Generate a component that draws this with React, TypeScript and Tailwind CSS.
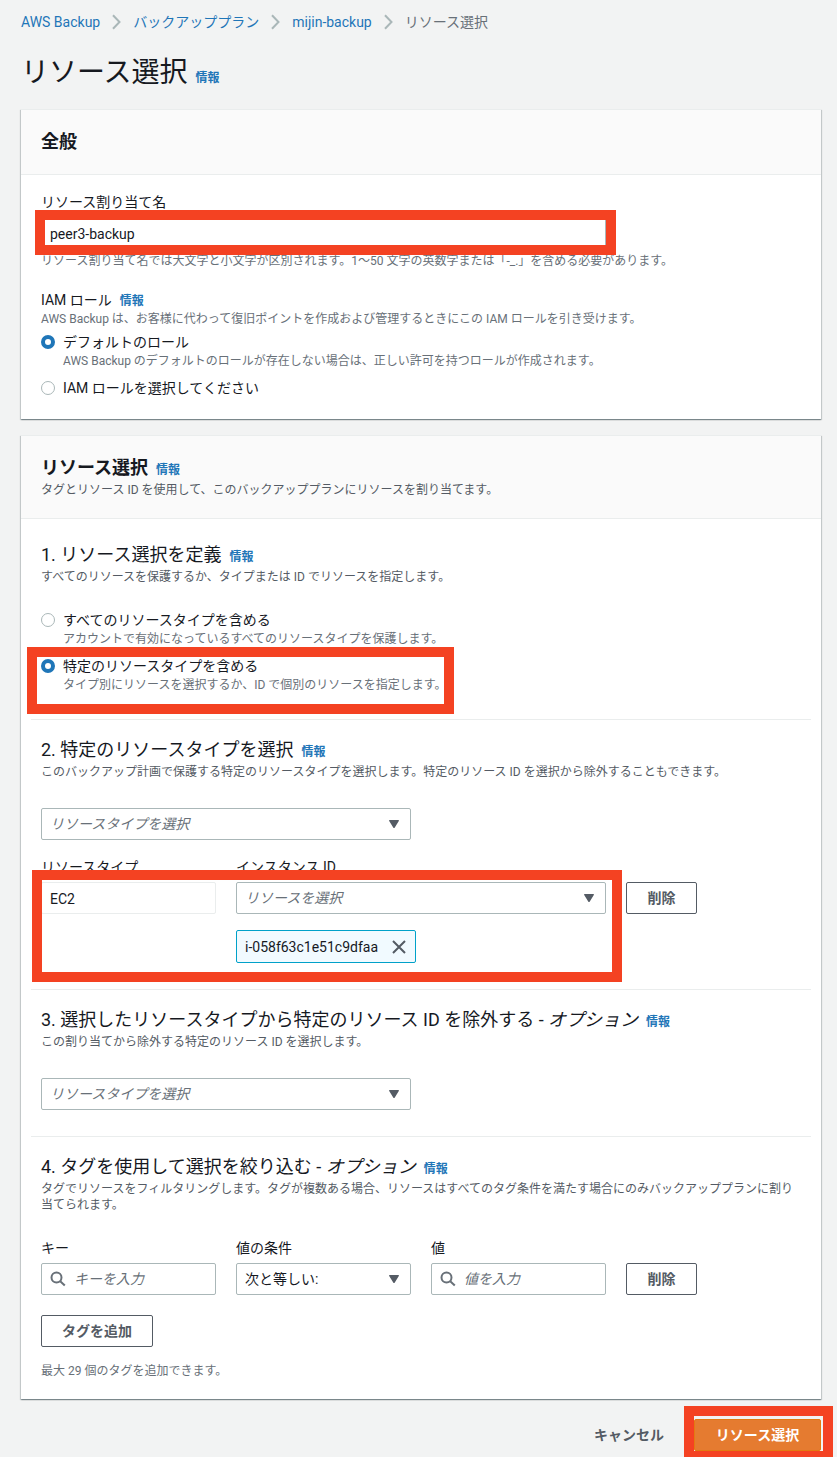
import { useState, type ReactNode } from 'react';

const fieldBase = 'h-8 w-full rounded-xs border border-[#aab7b8] bg-white text-sm text-[#16191f]';
const labelText = 'block text-sm leading-[22px] text-[#16191f]';
const hintText = 'text-xs leading-4 text-[#687078]';

function InfoLink() {
  return (
    <a href="#info" className="ml-2 text-xs font-bold not-italic text-[#1f76b8] hover:underline">
      情報
    </a>
  );
}

function Chevron() {
  return (
    <svg className="mx-3 shrink-0" width="9" height="16" viewBox="0 0 9 16" fill="none" stroke="#aab7b8" strokeWidth="2" aria-hidden="true">
      <path d="M1 1.2 7.5 8 1 14.8" />
    </svg>
  );
}

function SearchIcon() {
  return (
    <svg className="shrink-0" width="16" height="16" viewBox="0 0 16 16" fill="none" stroke="#687078" strokeWidth="2" aria-hidden="true">
      <circle cx="6.5" cy="6.5" r="5" />
      <path d="m10.2 10.2 4.6 4.3" />
    </svg>
  );
}

// Red frame that points the reader at a part of the form
function Highlight({ className }: { className: string }) {
  return <span aria-hidden="true" className={`pointer-events-none absolute z-10 border-10 border-[#f44222] ${className}`} />;
}

function Card({ title, children }: { title: ReactNode; children: ReactNode }) {
  return (
    <section className="border-t border-[#eaeded] bg-white shadow-[0_1px_1px_0_rgba(0,28,36,0.3),1px_1px_1px_0_rgba(0,28,36,0.15),-1px_1px_1px_0_rgba(0,28,36,0.15)]">
      <header className="border-b border-[#eaeded] bg-[#fafafa] p-5">{title}</header>
      {children}
    </section>
  );
}

interface StepProps {
  title: string;
  optional?: boolean;
  desc: string;
  children: ReactNode;
}

function Step({ title, optional, desc, children }: StepProps) {
  return (
    <section className="px-2.5 pt-[18px] pb-[26px] last:pb-2.5">
      <h3 className="text-lg leading-6">
        {title}
        {optional && <> - <i>オプション</i></>}
        <InfoLink />
      </h3>
      <p className="mt-0.5 text-xs leading-4 text-[#545b64]">{desc}</p>
      {children}
    </section>
  );
}

interface RadioProps {
  name: string;
  label: string;
  desc?: string;
  checked: boolean;
  onChange: () => void;
}

function Radio({ name, label, desc, checked, onChange }: RadioProps) {
  return (
    <label className="flex gap-2">
      <input
        type="radio"
        name={name}
        checked={checked}
        onChange={onChange}
        className="mt-1 size-3.5 shrink-0 appearance-none rounded-full border border-[#aab7b8] bg-white checked:border-4 checked:border-[#1f76b8]"
      />
      <span>
        <span className={labelText}>{label}</span>
        {desc && <span className={`block ${hintText}`}>{desc}</span>}
      </span>
    </label>
  );
}

interface SelectProps {
  id: string;
  label?: string;
  placeholder?: boolean;
  options: string[];
}

function Select({ id, label, placeholder, options }: SelectProps) {
  return (
    <div className="relative">
      <select
        id={id}
        aria-label={label}
        className={`${fieldBase} appearance-none pr-8 pl-2 ${placeholder ? 'italic text-[#687078]' : ''}`}
      >
        {options.map((o) => (
          <option key={o}>{o}</option>
        ))}
      </select>
      <svg className="pointer-events-none absolute top-3 right-3" width="10" height="8" viewBox="0 0 10 8" fill="#545b64" aria-hidden="true">
        <path d="M.8 0h8.4a.7.7 0 0 1 .6 1.1L5.8 7.4a1 1 0 0 1-1.6 0L.2 1.1A.7.7 0 0 1 .8 0Z" />
      </svg>
    </div>
  );
}

function SearchField({ id, label, placeholder }: { id: string; label: string; placeholder: string }) {
  return (
    <div>
      <label htmlFor={id} className={labelText}>{label}</label>
      <div className={`mt-1 flex items-center gap-2 px-2 ${fieldBase}`}>
        <SearchIcon />
        <input id={id} type="text" placeholder={placeholder} className="w-full min-w-0 outline-none placeholder:italic placeholder:text-[#687078]" />
      </div>
    </div>
  );
}

function Button({ children }: { children: ReactNode }) {
  return (
    <button type="button" className="h-8 min-w-[71px] justify-self-start rounded-xs border border-[#545b64] bg-white px-5 text-sm font-bold text-[#545b64]">
      {children}
    </button>
  );
}

export default function App() {
  const [role, setRole] = useState('default');
  const [scope, setScope] = useState('specific');

  return (
    <main className="overflow-hidden bg-[#f2f3f3] pt-[11px] pr-4 pb-1.5 pl-[21px] font-['Roboto','Noto_Sans_CJK_JP',sans-serif] text-[#16191f]">
      <nav aria-label="パンくずリスト" className="flex items-center text-sm leading-[22px]">
        <a href="#backup" className="text-[#1f76b8]">AWS Backup</a>
        <Chevron />
        <a href="#plans" className="text-[#1f76b8]">バックアッププラン</a>
        <Chevron />
        <a href="#plan" className="text-[#1f76b8]">mijin-backup</a>
        <Chevron />
        <span className="text-[#687078]">リソース選択</span>
      </nav>

      <h1 className="mt-[22px] text-[28px] leading-9">
        リソース選択
        <InfoLink />
      </h1>

      <div className="mt-[18px] space-y-4">
        {/* General */}
        <Card title={<h2 className="text-lg leading-6 font-bold">全般</h2>}>
          <div className="px-5 pt-4 pb-5">
            <label htmlFor="assignment" className={labelText}>リソース割り当て名</label>
            <div className="mt-1 grid grid-cols-4 gap-5">
              <div className="relative col-span-3">
                <input id="assignment" type="text" defaultValue="peer3-backup" className={`${fieldBase} px-2 pt-0.5`} />
                <Highlight className="-top-[7px] -right-2.5 -bottom-1.5 -left-1.5" />
              </div>
            </div>
            <p className={`mt-1 ${hintText}`}>
              リソース割り当て名では大文字と小文字が区別されます。1～50 文字の英数字または「-_.」を含める必要があります。
            </p>

            <h3 className="mt-5 text-sm leading-[22px]">
              IAM ロール
              <InfoLink />
            </h3>
            <p className={hintText}>AWS Backup は、お客様に代わって復旧ポイントを作成および管理するときにこの IAM ロールを引き受けます。</p>
            <div className="mt-1 space-y-2">
              <Radio
                name="role"
                label="デフォルトのロール"
                desc="AWS Backup のデフォルトのロールが存在しない場合は、正しい許可を持つロールが作成されます。"
                checked={role === 'default'}
                onChange={() => setRole('default')}
              />
              <Radio name="role" label="IAM ロールを選択してください" checked={role === 'custom'} onChange={() => setRole('custom')} />
            </div>
          </div>
        </Card>

        {/* Resource selection */}
        <Card
          title={
            <>
              <h2 className="text-lg leading-6 font-bold">
                リソース選択
                <InfoLink />
              </h2>
              <p className="mt-0.5 text-xs leading-4 text-[#545b64]">タグとリソース ID を使用して、このバックアッププランにリソースを割り当てます。</p>
            </>
          }
        >
          <div className="divide-y divide-[#eaeded] px-2.5 pt-1.5 pb-2.5">
            <Step title="1. リソース選択を定義" desc="すべてのリソースを保護するか、タイプまたは ID でリソースを指定します。">
              <div className="mt-6 space-y-2">
                <Radio
                  name="scope"
                  label="すべてのリソースタイプを含める"
                  desc="アカウントで有効になっているすべてのリソースタイプを保護します。"
                  checked={scope === 'all'}
                  onChange={() => setScope('all')}
                />
                <div className="relative">
                  <Radio
                    name="scope"
                    label="特定のリソースタイプを含める"
                    desc="タイプ別にリソースを選択するか、ID で個別のリソースを指定します。"
                    checked={scope === 'specific'}
                    onChange={() => setScope('specific')}
                  />
                  <Highlight className="-top-2 -bottom-[21px] -left-3.5 w-[427px]" />
                </div>
              </div>
            </Step>

            <Step
              title="2. 特定のリソースタイプを選択"
              desc="このバックアップ計画で保護する特定のリソースタイプを選択します。特定のリソース ID を選択から除外することもできます。"
            >
              <div className="mt-7 grid grid-cols-2 gap-5">
                <Select id="include-type" label="リソースタイプ" placeholder options={['リソースタイプを選択']} />
              </div>
              <div className="mt-4 grid grid-cols-4 gap-5">
                <div className="relative col-span-3 grid grid-cols-3 gap-5">
                  <div>
                    <label htmlFor="type" className={labelText}>リソースタイプ</label>
                    <input id="type" type="text" readOnly value="EC2" className="mt-1 h-8 w-full rounded-xs border border-[#eaeded] px-2 pt-0.5 text-sm" />
                  </div>
                  <div className="col-span-2">
                    <label htmlFor="instance" className={`mb-1 ${labelText}`}>インスタンス ID</label>
                    <Select id="instance" placeholder options={['リソースを選択']} />
                    <div className="mt-4 flex h-[33px] w-fit min-w-[180px] items-center justify-between gap-2 rounded-xs border border-[#00a1c9] bg-[#f1faff] px-2 text-sm">
                      <span>i-058f63c1e51c9dfaa</span>
                      <button type="button" aria-label="i-058f63c1e51c9dfaa を削除">
                        <svg width="16" height="16" viewBox="0 0 16 16" fill="none" stroke="#545b64" strokeWidth="2" aria-hidden="true">
                          <path d="m2 2 12 12M14 2 2 14" />
                        </svg>
                      </button>
                    </div>
                  </div>
                  <Highlight className="top-3.5 -right-4 -bottom-[19px] -left-[9px]" />
                </div>
                <div className="pt-[26px]">
                  <Button>削除</Button>
                </div>
              </div>
            </Step>

            <Step title="3. 選択したリソースタイプから特定のリソース ID を除外する" optional desc="この割り当てから除外する特定のリソース ID を選択します。">
              <div className="mt-7 grid grid-cols-2 gap-5">
                <Select id="exclude-type" label="除外するリソースタイプ" placeholder options={['リソースタイプを選択']} />
              </div>
            </Step>

            <Step
              title="4. タグを使用して選択を絞り込む"
              optional
              desc="タグでリソースをフィルタリングします。タグが複数ある場合、リソースはすべてのタグ条件を満たす場合にのみバックアッププランに割り当てられます。"
            >
              <div className="mt-6 grid grid-cols-4 items-end gap-5">
                <SearchField id="key" label="キー" placeholder="キーを入力" />
                <div>
                  <label htmlFor="condition" className={`mb-1 ${labelText}`}>値の条件</label>
                  <Select id="condition" options={['次と等しい:']} />
                </div>
                <SearchField id="value" label="値" placeholder="値を入力" />
                <Button>削除</Button>
              </div>
              <div className="mt-5 flex">
                <Button>タグを追加</Button>
              </div>
              <p className={`mt-4 ${hintText}`}>最大 29 個のタグを追加できます。</p>
            </Step>
          </div>
        </Card>
      </div>

      <footer className="mt-5 flex items-center justify-end gap-[30px] text-sm font-bold">
        <button type="button" className="text-[#545b64]">キャンセル</button>
        <div className="relative">
          <button type="submit" className="h-8 min-w-[127px] rounded-xs border border-[#e47911] bg-[#e57b30] px-5 text-white">リソース選択</button>
          <Highlight className="-top-[13px] -right-3 -bottom-2.5 -left-2.5" />
        </div>
      </footer>
    </main>
  );
}
